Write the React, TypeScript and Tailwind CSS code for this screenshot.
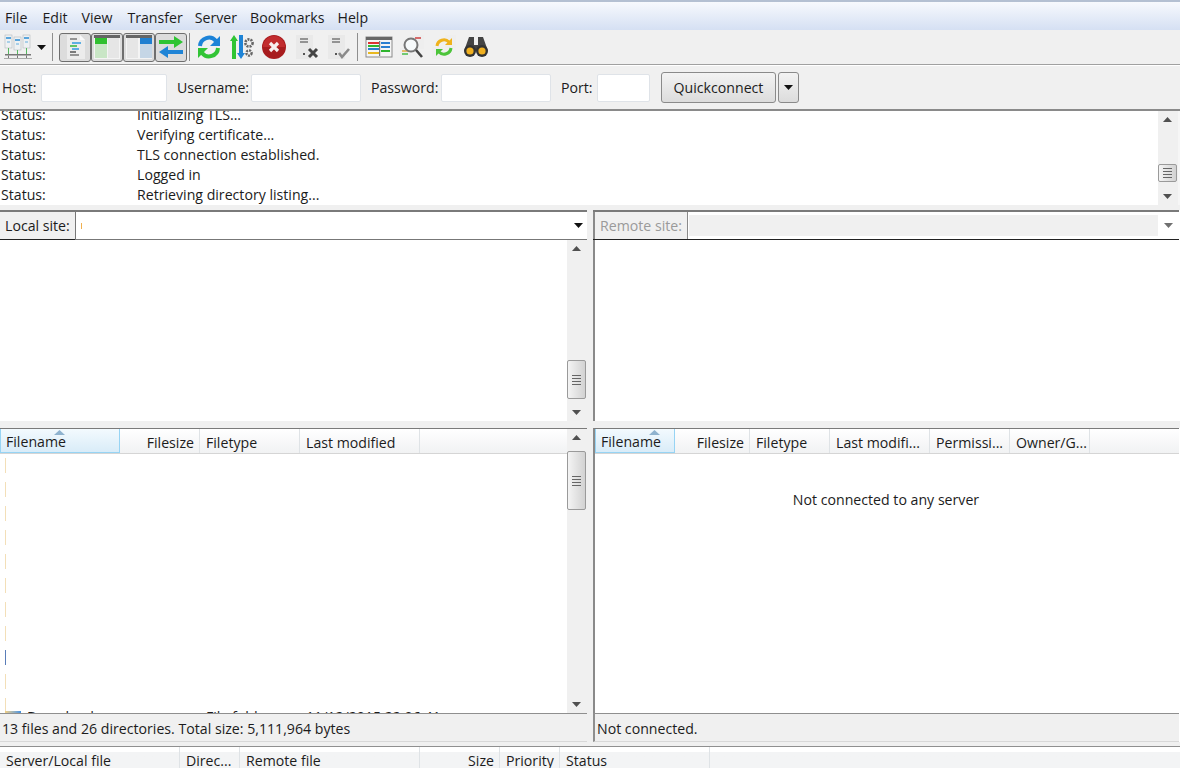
// App.tsx
const font = 'font-["Open_Sans","Liberation_Sans",sans-serif]';

/* ================= Toolbar icons ================= */
function SiteManagerIcon() {
  return (
    <svg width="30" height="28" viewBox="0 0 30 28">
      {[
        [2, 2],
        [11, 4],
        [20, 2],
      ].map(([x, y]) => (
        <g key={x}>
          <rect x={x} y={y} width="7" height="13" fill="#eef1f3" stroke="#b4bbc0" strokeWidth="0.6" />
          <rect x={x + 1} y={y + 2} width="5" height="2" fill="#5aa5dc" />
          <rect x={x + 2} y={y + 6} width="3" height="2" fill="#a9cfe8" />
          <rect x={x + 3} y={y + 13} width="1" height={21 - y - 13} fill="#55b85e" />
        </g>
      ))}
      <rect x="2" y="21" width="26" height="1.5" fill="#777" />
      <path d="M5.5 22.5v3M14.5 22.5v3M23.5 22.5v3" stroke="#777" />
      <rect x="1" y="25" width="28" height="1" fill="#aaa" />
    </svg>
  );
}
function LogIcon() {
  return (
    <svg width="22" height="26" viewBox="0 0 22 26">
      <path d="M3 1h13l5 5v19H3z" fill="#ececec" />
      <path d="M16 1l5 5h-5z" fill="#fafafa" />
      <path d="M6 5h7M6 21h9" stroke="#777" strokeWidth="1.5" />
      <path d="M8 9h9M8 15h7" stroke="#2f9adf" strokeWidth="1.5" />
      <path d="M6 12h7" stroke="#35b93a" strokeWidth="1.5" />
      <path d="M6 18h6" stroke="#555" strokeWidth="1.5" />
    </svg>
  );
}
function PaneIcon({ side }: { side: 'left' | 'right' }) {
  const left = side === 'left';
  return (
    <svg width="28" height="26" viewBox="0 0 28 26">
      <rect x="1" y="1" width="26" height="24" fill="#f4f4f4" />
      <rect x="1" y="1" width="26" height="3" fill="#666" />
      <rect x={left ? 2 : 15} y="4" width="12" height="6" fill={left ? '#2fc02f' : '#1f7fd0'} />
      <rect x={left ? 2 : 15} y="10" width="12" height="14" fill={left ? '#c9e6c6' : '#c5d6e6'} />
      <rect x={left ? 15 : 2} y="4" width="11" height="20" fill="#e6e6e6" />
    </svg>
  );
}
function TransferIcon() {
  return (
    <svg width="28" height="26" viewBox="0 0 28 26">
      <path d="M2 6h15V2l9 6-9 6v-4H2z" fill="#2fc433" />
      <path d="M26 16H11v-4l-9 6 9 6v-4h15z" fill="#1f84d6" />
    </svg>
  );
}
function RefreshIcon() {
  return (
    <svg width="26" height="26" viewBox="0 0 26 26" fill="none">
      <path d="M4 12a9 9 0 0 1 16-5" stroke="#1d83d8" strokeWidth="4" />
      <path d="M24 2v10H14z" fill="#1d83d8" />
      <path d="M22 14a9 9 0 0 1-16 5" stroke="#32c436" strokeWidth="4" />
      <path d="M2 24V14h10z" fill="#32c436" />
    </svg>
  );
}
function FilterIcon() {
  return (
    <svg width="26" height="26" viewBox="0 0 26 26">
      <path d="M5 1l4 6H7v18H3V7H1z" fill="#2fc433" />
      <path d="M10 1h4v18h2l-4 6-4-6h2z" fill="#1f84d6" />
      <circle cx="20" cy="9" r="3.6" fill="none" stroke="#666" strokeWidth="2.6" strokeDasharray="2 1" />
      <circle cx="20" cy="19" r="2.6" fill="none" stroke="#666" strokeWidth="2.4" strokeDasharray="2 1" />
    </svg>
  );
}
function CancelIcon() {
  return (
    <svg width="26" height="26" viewBox="0 0 26 26">
      <circle cx="13" cy="13" r="12" fill="#a81c1e" />
      <path d="M2 13a11 11 0 0 1 22 0z" fill="#c22c2e" />
      <path d="M9 9l8 8M17 9l-8 8" stroke="#f7eeee" strokeWidth="3.2" />
    </svg>
  );
}
function QueueDocIcon({ done }: { done?: boolean }) {
  return (
    <svg width="26" height="26" viewBox="0 0 26 26">
      <rect x="2" y="1" width="17" height="24" fill="#e9e9e9" />
      <path d="M6 5h8M6 8h8" stroke="#777" strokeWidth="1.3" />
      <rect x="9" y="19" width="2" height="2" fill="#555" />
      {done ? (
        <path d="M13 19l3 4 7-8" fill="none" stroke="#8a8a8a" strokeWidth="2.6" />
      ) : (
        <path d="M15 15l8 8M23 15l-8 8" stroke="#444" strokeWidth="3" />
      )}
    </svg>
  );
}
function CompareIcon() {
  return (
    <svg width="28" height="24" viewBox="0 0 28 24">
      <rect x="1" y="2" width="26" height="20" fill="#f5f5f5" stroke="#8a8a8a" />
      <rect x="1" y="2" width="26" height="3" fill="#666" />
      <path d="M3 8h11" stroke="#d33" strokeWidth="2" />
      <path d="M3 11h11" stroke="#2fb52f" strokeWidth="2" />
      <path d="M3 14h11" stroke="#2a7fd0" strokeWidth="2" />
      <path d="M3 18h11" stroke="#e8b820" strokeWidth="2" />
      <path d="M16 8h9M16 12h9" stroke="#2a7fd0" strokeWidth="2" />
      <path d="M16 16h9" stroke="#2fb52f" strokeWidth="2" />
      <rect x="14" y="6" width="1.2" height="15" fill="#777" />
    </svg>
  );
}
function SearchIcon() {
  return (
    <svg width="26" height="26" viewBox="0 0 26 26">
      <rect x="13" y="1" width="12" height="14" fill="#eee" />
      <path d="M16 4h6" stroke="#c33" strokeWidth="1.4" />
      <rect x="1" y="14" width="11" height="11" fill="#eee" />
      <path d="M3 17h6" stroke="#e0a020" strokeWidth="1.3" />
      <path d="M3 20h6" stroke="#2fb52f" strokeWidth="1.3" />
      <circle cx="12" cy="11" r="6.5" fill="#f6f9fa" stroke="#777" strokeWidth="2" />
      <path d="M17 16l6 7" stroke="#444" strokeWidth="2.6" />
    </svg>
  );
}
function SyncIcon() {
  return (
    <svg width="26" height="26" viewBox="0 0 26 26" fill="none">
      <rect x="14" y="1" width="11" height="13" fill="#eee" />
      <rect x="1" y="13" width="11" height="12" fill="#eee" />
      <path d="M6 12a7 7 0 0 1 12-4" stroke="#efb21c" strokeWidth="3" />
      <path d="M21 4v7h-7z" fill="#efb21c" />
      <path d="M20 14a7 7 0 0 1-12 4" stroke="#4cc43a" strokeWidth="3" />
      <path d="M5 22v-7h7z" fill="#4cc43a" />
    </svg>
  );
}
function BinocularsIcon() {
  return (
    <svg width="26" height="24" viewBox="0 0 26 24">
      <path d="M6 2h5v8h4V2h5l5 14H1z" fill="#444" />
      <circle cx="7" cy="16" r="6" fill="#333" />
      <circle cx="19" cy="16" r="6" fill="#333" />
      <circle cx="7" cy="16" r="3.6" fill="#f0b020" />
      <circle cx="19" cy="16" r="3.6" fill="#f0b020" />
    </svg>
  );
}

/* ================= Small pieces ================= */
function ToggleBtn({ children }: { children: React.ReactNode }) {
  return (
    <div className="flex h-[29px] w-[32px] items-center justify-center rounded-[3px] border border-[#6e6e6e] bg-[#dcdcdc]">
      {children}
    </div>
  );
}
function Arrow({ up, color = '#505050' }: { up?: boolean; color?: string }) {
  return (
    <svg width="9" height="5" viewBox="0 0 9 5">
      <path d={up ? 'M0 5L4.5 0L9 5z' : 'M0 0L9 0L4.5 5z'} fill={color} />
    </svg>
  );
}
function Thumb({ h }: { h: string }) {
  return (
    <div
      className={`flex ${h} w-[19px] flex-col items-center justify-center gap-[2px] rounded-[2px] border border-[#9a9a9a] bg-gradient-to-r from-[#f4f4f4] to-[#d2d2d2]`}
    >
      <div className="h-px w-[9px] bg-[#666]" />
      <div className="h-px w-[9px] bg-[#666]" />
      <div className="h-px w-[9px] bg-[#666]" />
      <div className="h-px w-[9px] bg-[#666]" />
    </div>
  );
}
/** Vertical scrollbar; `before` is the free track above the thumb */
function Scrollbar({ before, thumb }: { before: string; thumb: string }) {
  return (
    <div className="flex h-full w-[20px] shrink-0 flex-col items-start bg-[#f0f0f0]">
      <div className="flex h-[17px] w-[19px] shrink-0 items-center justify-center">
        <Arrow up />
      </div>
      <div className={`${before} shrink-0`} />
      <Thumb h={thumb} />
      <div className="flex-1" />
      <div className="flex h-[17px] w-[19px] shrink-0 items-center justify-center">
        <Arrow />
      </div>
    </div>
  );
}
function Field({ label, width, labelW }: { label: string; width: string; labelW: string }) {
  return (
    <>
      <span className={`${labelW} shrink-0 whitespace-nowrap text-[#1c1c1c]`}>{label}</span>
      <div className={`${width} h-[28px] shrink-0 rounded-[2px] border border-[#dfe3e8] bg-white`} />
    </>
  );
}
function HeaderCell({
  label,
  width,
  right,
  active,
}: {
  label: string;
  width: string;
  right?: boolean;
  active?: boolean;
}) {
  if (active) {
    return (
      <div
        className={`relative ${width} flex h-full shrink-0 items-end border border-t-0 border-[#97d4f4] bg-gradient-to-b from-[#f3fafe] to-[#d9ecf8] pl-[5px] text-[#1c1c1c]`}
      >
        <svg className="absolute left-[53px] top-[1px]" width="11" height="5" viewBox="0 0 11 5">
          <path d="M0 5L5.5 0L11 5z" fill="#8fb3cf" />
        </svg>
        {label}
      </div>
    );
  }
  return (
    <div
      className={`${width} flex h-full shrink-0 items-end overflow-hidden whitespace-nowrap border-r border-[#dfe3e6] text-[#1c1c1c] ${
        right ? 'justify-end pr-[5px]' : 'pl-[6px]'
      }`}
    >
      {label}
    </div>
  );
}
// queue header is cut off by the bottom of the window
function QueueCell({ label, width, right }: { label: string; width: string; right?: boolean }) {
  return (
    <div
      className={`${width} h-full shrink-0 overflow-hidden whitespace-nowrap border-r border-[#dfe3e6] pt-[4px] ${
        right ? 'pr-[5px] text-right' : 'pl-[6px]'
      }`}
    >
      {label}
    </div>
  );
}

const logRows = [
  'Initializing TLS...',
  'Verifying certificate...',
  'TLS connection established.',
  'Logged in',
  'Retrieving directory listing...',
];
// clipped folder icons along the left edge of the local list
const clippedIcons = Array.from({ length: 11 });

/* ================= Component ================= */
export default function App() {
  return (
    <div className={`${font} flex h-[768px] w-[1180px] flex-col overflow-hidden bg-[#f0f0f0] text-[14.15px] leading-[20px]`}>
      {/* Menu */}
      <div className="h-[2px] shrink-0 bg-[#b4c0d2]" />
      <div className="flex h-[28px] shrink-0 items-end bg-gradient-to-b from-[#f7f9fd] to-[#d5e0f3] pb-[2px] pl-[5px] text-[#1c1c1c]">
        <span>File</span>
        <span className="ml-[15px]">Edit</span>
        <span className="ml-[14px]">View</span>
        <span className="ml-[15px]">Transfer</span>
        <span className="ml-[12px]">Server</span>
        <span className="ml-[13px]">Bookmarks</span>
        <span className="ml-[13px]">Help</span>
      </div>

      {/* Toolbar */}
      <div className="flex h-[35px] shrink-0 items-center border-b border-[#a0a0a0] pl-[3px]">
        <SiteManagerIcon />
        <div className="ml-[4px] flex">
          <Arrow color="#111" />
        </div>
        <div className="ml-[6px] mr-[6px] h-[28px] w-px bg-[#8e8e8e]" />
        <ToggleBtn>
          <LogIcon />
        </ToggleBtn>
        <ToggleBtn>
          <PaneIcon side="left" />
        </ToggleBtn>
        <ToggleBtn>
          <PaneIcon side="right" />
        </ToggleBtn>
        <ToggleBtn>
          <TransferIcon />
        </ToggleBtn>
        <div className="ml-[2px] mr-[6px] h-[28px] w-px bg-[#8e8e8e]" />
        <div className="flex items-center gap-[6.5px]">
          <RefreshIcon />
          <FilterIcon />
          <CancelIcon />
          <QueueDocIcon />
          <QueueDocIcon done />
        </div>
        <div className="ml-[5px] mr-[7px] h-[28px] w-px bg-[#8e8e8e]" />
        <div className="flex items-center gap-[6px]">
          <CompareIcon />
          <SearchIcon />
          <SyncIcon />
          <BinocularsIcon />
        </div>
      </div>

      {/* Quickconnect */}
      <div className="flex h-[44px] shrink-0 items-center border-t border-white pl-[2px]">
        <Field label="Host:" labelW="w-[39px]" width="w-[126px]" />
        <div className="w-[10px]" />
        <Field label="Username:" labelW="w-[74px]" width="w-[110px]" />
        <div className="w-[10px]" />
        <Field label="Password:" labelW="w-[70px]" width="w-[110px]" />
        <div className="w-[10px]" />
        <Field label="Port:" labelW="w-[36px]" width="w-[53px]" />
        <div className="ml-[11px] flex h-[31px] w-[115px] items-center justify-center rounded-[3px] border border-[#8a8a8a] bg-gradient-to-b from-[#f3f3f3] to-[#dcdcdc] text-[#1c1c1c]">
          Quickconnect
        </div>
        <div className="ml-[2px] flex h-[31px] w-[21px] items-center justify-center rounded-[3px] border border-[#8a8a8a] bg-gradient-to-b from-[#f3f3f3] to-[#dcdcdc]">
          <Arrow color="#111" />
        </div>
      </div>

      {/* Message log */}
      <div className="flex h-[96px] shrink-0 border-t-2 border-[#8a8a8a]">
        <div className="flex-1 overflow-hidden bg-white">
          <div className="-mt-[6px]">
            {logRows.map((msg) => (
              <div key={msg} className="flex h-[20px] items-center text-[#1c1c1c]">
                <span className="w-[137px] shrink-0 pl-[1px]">Status:</span>
                <span>{msg}</span>
              </div>
            ))}
          </div>
        </div>
        <Scrollbar before="h-[36px]" thumb="h-[18px]" />
        <div className="w-[2px] shrink-0 bg-[#f6f6f6]" />
      </div>

      <div className="h-[5px] shrink-0 bg-[#f0f0f0]" />

      {/* Panes */}
      <div className="flex h-[211px] shrink-0">
        {/* Local tree */}
        <div className="mr-[6px] flex w-[587px] shrink-0 flex-col border-t-2 border-[#7a7a7a]">
          <div className="flex h-[28px] shrink-0">
            <div className="flex w-[75px] shrink-0 items-center border-b border-[#222] pl-[5px] text-[#1c1c1c]">
              Local site:
            </div>
            <div className="flex flex-1 items-center justify-between border-b border-l border-[#777] bg-white pl-[5px] pr-[4px]">
              <div className="h-[6px] w-px bg-[#f0b050]" />
              <Arrow color="#111" />
            </div>
          </div>
          <div className="flex min-h-0 flex-1">
            <div className="flex-1 bg-white" />
            <Scrollbar before="h-[103px]" thumb="h-[39px]" />
          </div>
        </div>
        {/* Remote tree */}
        <div className="flex min-w-0 flex-1 flex-col border-t-2 border-[#7a7a7a]">
          <div className="flex h-[28px] shrink-0 border-b border-[#222]">
            <div className="flex w-[95px] shrink-0 items-center border-l-2 border-r border-[#8a8a8a] pl-[5px] text-[#9a9a9a]">
              Remote site:
            </div>
            <div className="flex flex-1 items-center justify-between bg-white">
              <div className="h-full flex-1 border-y-[3px] border-l-[1px] border-white bg-[#f0f0f0]" />
              <div className="flex w-[21px] justify-center">
                <Arrow color="#707070" />
              </div>
            </div>
          </div>
          <div className="flex-1 border-l-2 border-[#8a8a8a] bg-white" />
        </div>
        <div className="w-px shrink-0 bg-white" />
      </div>

      <div className="h-[7px] shrink-0 bg-[#f0f0f0]" />

      <div className="flex h-[285px] shrink-0">
        {/* Local list */}
        <div className="mr-[6px] flex w-[587px] shrink-0 flex-col border-t border-[#7a7a7a]">
          <div className="flex min-h-0 flex-1">
            <div className="flex min-w-0 flex-1 flex-col bg-white">
              <div className="flex h-[25px] shrink-0 border-b border-[#d5d5d5] bg-gradient-to-b from-white to-[#f1f2f3]">
                <HeaderCell label="Filename" width="w-[120px]" active />
                <HeaderCell label="Filesize" width="w-[80px]" right />
                <HeaderCell label="Filetype" width="w-[100px]" />
                <HeaderCell label="Last modified" width="w-[120px]" />
              </div>
              <div className="relative min-h-0 flex-1 overflow-hidden">
                <div className="flex flex-col pl-[5px] pt-[4px]">
                  {clippedIcons.map((_, i) => (
                    <div
                      key={i}
                      className={`mb-[9px] h-[15px] w-px shrink-0 ${i === 8 ? 'bg-[#5a7db8]' : 'bg-[#f3dfb8]'}`}
                    />
                  ))}
                </div>
                {/* row cut off by the status bar */}
                <div className="absolute bottom-[-14px] left-0 flex h-[20px] items-center text-[#1c1c1c]">
                  <div className="ml-[5px] h-[12px] w-[16px] bg-gradient-to-r from-[#f3cf80] to-[#3f8fe0]" />
                  <span className="ml-[6px] w-[179px]">Downloads</span>
                  <span className="w-[100px]">File folder</span>
                  <span>11/12/2015 22:06:41</span>
                </div>
              </div>
            </div>
            <Scrollbar before="h-[5px]" thumb="h-[59px]" />
          </div>
        </div>
        {/* Remote list */}
        <div className="flex min-w-0 flex-1 flex-col border-l-2 border-t border-[#7a7a7a] border-l-[#8a8a8a] bg-white">
          <div className="flex h-[25px] shrink-0 border-b border-[#d5d5d5] bg-gradient-to-b from-white to-[#f1f2f3]">
            <HeaderCell label="Filename" width="w-[80px]" active />
            <HeaderCell label="Filesize" width="w-[75px]" right />
            <HeaderCell label="Filetype" width="w-[80px]" />
            <HeaderCell label="Last modifi..." width="w-[100px]" />
            <HeaderCell label="Permissi..." width="w-[80px]" />
            <HeaderCell label="Owner/G..." width="w-[80px]" />
          </div>
          <div className="flex-1 pr-[2px] pt-[36px] text-center text-[#1c1c1c]">Not connected to any server</div>
        </div>
        <div className="w-px shrink-0 bg-white" />
      </div>

      {/* Status lines */}
      <div className="flex h-[29px] shrink-0">
        <div className="mr-[6px] flex w-[587px] shrink-0 items-center border-y border-[#8f8f8f] border-b-[#d8d8d8] pl-[2px] pt-[2px] text-[#1c1c1c]">
          13 files and 26 directories. Total size: 5,111,964 bytes
        </div>
        <div className="flex min-w-0 flex-1 items-center border-y border-l-2 border-[#8f8f8f] border-b-[#d8d8d8] pl-[2px] pt-[2px] text-[#1c1c1c]">
          Not connected.
        </div>
        <div className="w-px shrink-0 bg-white" />
      </div>

      <div className="h-[4px] shrink-0 bg-[#f0f0f0]" />

      {/* Queue */}
      <div className="h-[22px] shrink-0 border-t border-[#8f8f8f] bg-white">
        <div className="flex h-full bg-gradient-to-b from-white from-[25%] to-[#f3f4f5] to-[25%] text-[#1c1c1c]">
          <QueueCell label="Server/Local file" width="w-[180px]" />
          <QueueCell label="Direc..." width="w-[60px]" />
          <QueueCell label="Remote file" width="w-[180px]" />
          <QueueCell label="Size" width="w-[80px]" right />
          <QueueCell label="Priority" width="w-[60px]" />
          <QueueCell label="Status" width="w-[150px]" />
        </div>
      </div>
    </div>
  );
}
